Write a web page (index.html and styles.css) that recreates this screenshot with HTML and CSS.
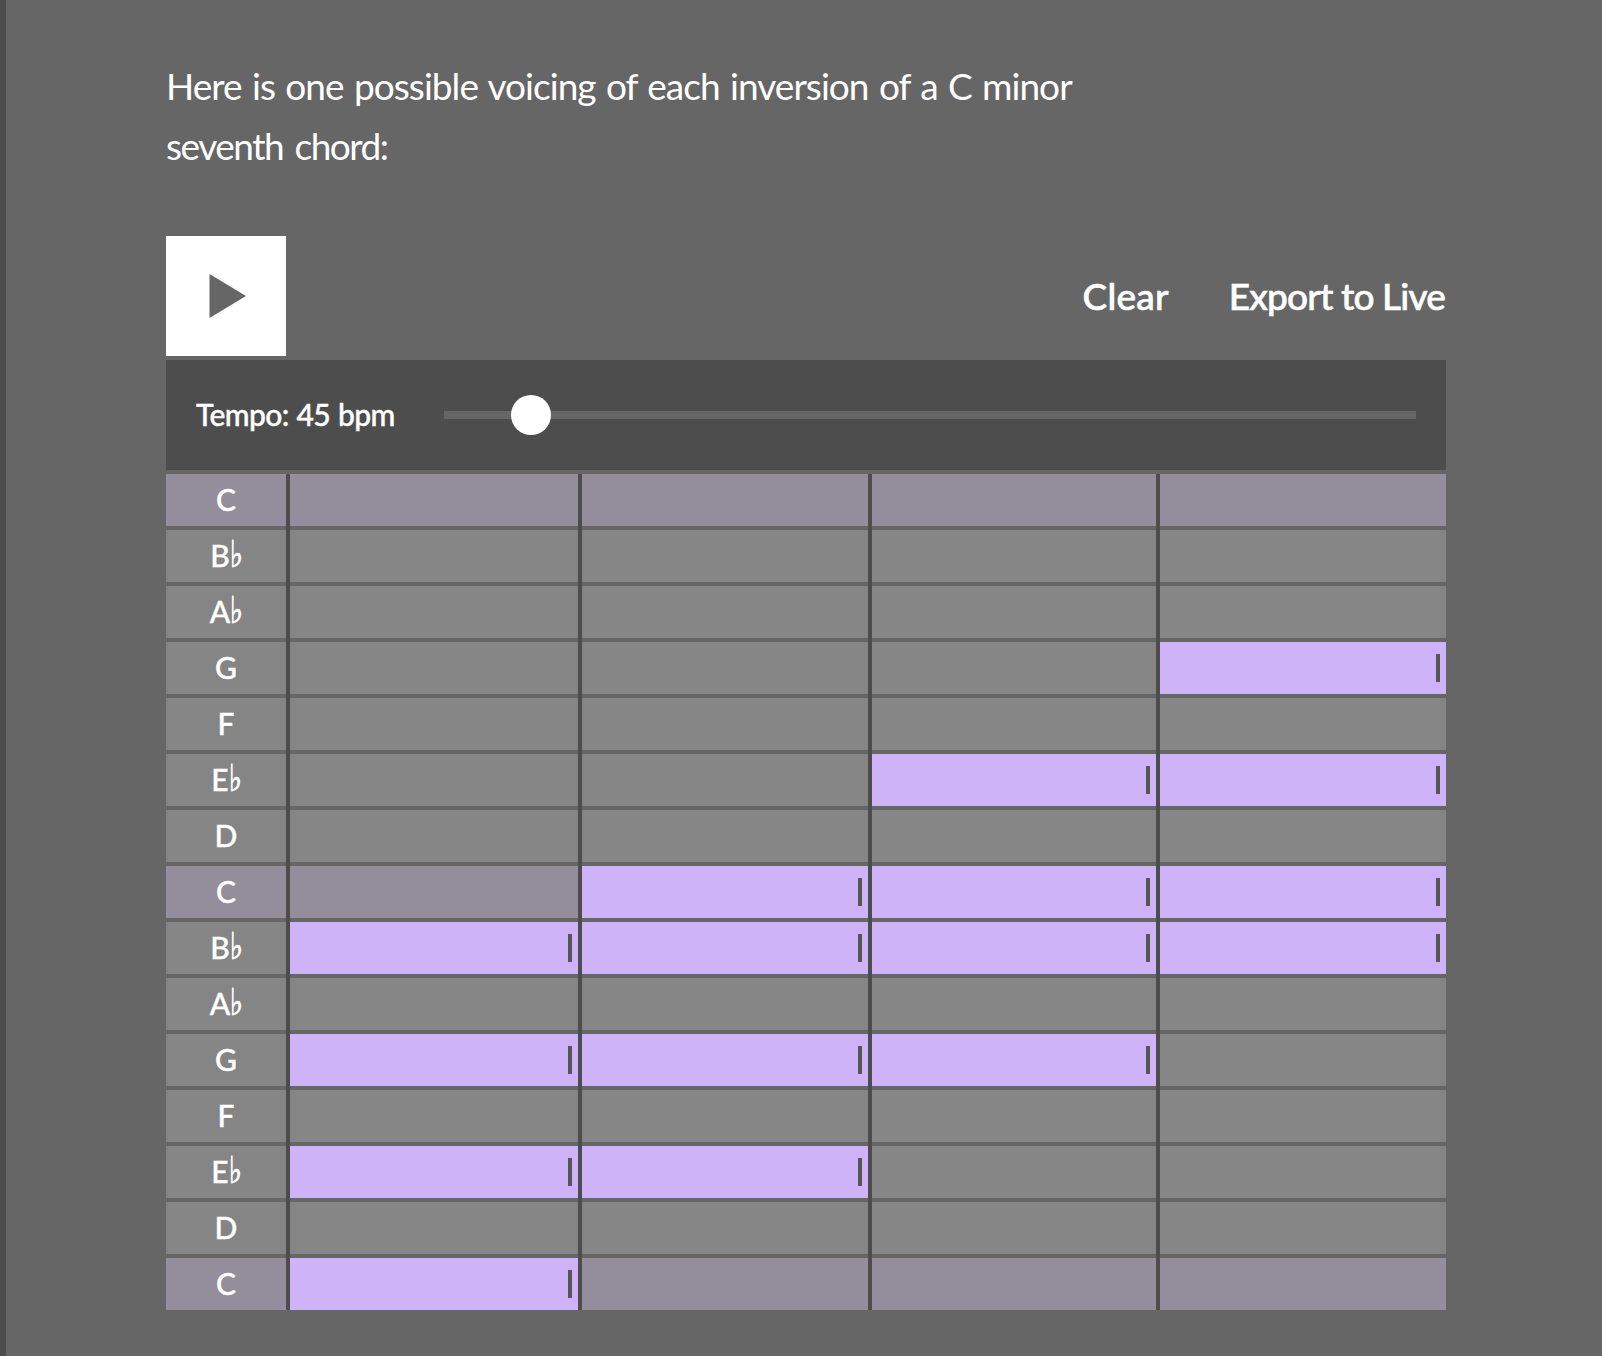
FILE: index.html
```html
<!DOCTYPE html>
<html lang="en">
<head>
<meta charset="utf-8">
<title>Inversions</title>
<link rel="stylesheet" href="styles.css">
</head>
<body>
<main class="page">
<p class="intro"><span class="line-one">Here is one possible voicing of each inversion of a C minor</span><br><span class="line-two">seventh chord:</span></p>
<div class="toolbar">
<button class="play" aria-label="Play"><svg width="37" height="44" viewBox="0 0 37 44"><path d="M0.5 0L37 22L0.5 44Z" fill="#666"/></svg></button>
<nav class="actions"><a class="clear">Clear</a><a class="export">Export to Live</a></nav>
</div>
<div class="tempo"><span class="tempo-label">Tempo: 45 bpm</span><div class="track"><div class="thumb"></div></div></div>
<div class="roll">
<div class="row root"><b>C</b><i></i><i></i><i></i><i></i></div>
<div class="row"><b>B<s>♭</s></b><i></i><i></i><i></i><i></i></div>
<div class="row"><b>A<s>♭</s></b><i></i><i></i><i></i><i></i></div>
<div class="row"><b>G</b><i></i><i></i><i></i><i class="on"></i></div>
<div class="row"><b>F</b><i></i><i></i><i></i><i></i></div>
<div class="row"><b>E<s>♭</s></b><i></i><i></i><i class="on"></i><i class="on"></i></div>
<div class="row"><b>D</b><i></i><i></i><i></i><i></i></div>
<div class="row root"><b>C</b><i></i><i class="on"></i><i class="on"></i><i class="on"></i></div>
<div class="row"><b>B<s>♭</s></b><i class="on"></i><i class="on"></i><i class="on"></i><i class="on"></i></div>
<div class="row"><b>A<s>♭</s></b><i></i><i></i><i></i><i></i></div>
<div class="row"><b>G</b><i class="on"></i><i class="on"></i><i class="on"></i><i></i></div>
<div class="row"><b>F</b><i></i><i></i><i></i><i></i></div>
<div class="row"><b>E<s>♭</s></b><i class="on"></i><i class="on"></i><i></i><i></i></div>
<div class="row"><b>D</b><i></i><i></i><i></i><i></i></div>
<div class="row root"><b>C</b><i class="on"></i><i></i><i></i><i></i></div>
</div>
</main>
</body>
</html>
```
FILE: styles.css
```css
* { box-sizing: border-box; }
body {
  margin: 0;
  background: #666;
  color: #fff;
  font-family: Lato, "Liberation Sans", sans-serif;
}
.page {
  height: 1356px;
  overflow: hidden;
  border-left: 6px solid #4d4d4d;
  padding: 56px 156px 0 160px;
}
.intro {
  margin: 0;
  height: 180px;
  font-size: 37px;
  line-height: 60px;
  white-space: nowrap;
}
.line-one { letter-spacing: -0.95px; word-spacing: 1.8px; }
.line-two { letter-spacing: -1.5px; word-spacing: 3.5px; }
.toolbar {
  display: flex;
  justify-content: space-between;
  height: 120px;
}
.play {
  width: 120px;
  height: 120px;
  padding: 0 0 0 3px;
  border: 0;
  background: #fff;
  display: flex;
  align-items: center;
  justify-content: center;
}
.actions {
  display: flex;
  align-items: center;
  gap: 60px;
  padding: 0 1px 2px 0;
  font-size: 37px;
  font-weight: 500;
  -webkit-text-stroke: 0.6px #fff;
}
.clear { letter-spacing: 0.2px; }
.export { letter-spacing: -0.85px; }
.tempo {
  display: flex;
  align-items: center;
  justify-content: space-between;
  height: 110px;
  margin: 4px 0;
  padding: 0 30px;
  background: #4d4d4d;
}
.tempo-label {
  padding-bottom: 2px;
  font-size: 30px;
  font-weight: 500;
  letter-spacing: -0.6px;
  word-spacing: 0.8px;
  white-space: nowrap;
  -webkit-text-stroke: 0.4px #fff;
}
.track {
  display: flex;
  align-items: center;
  width: 972px;
  height: 8px;
  padding-left: 67px;
  background: #666;
}
.thumb {
  flex: none;
  width: 40px;
  height: 40px;
  border-radius: 50%;
  background: #fff;
}
.roll {
  display: grid;
  grid-auto-rows: 52px;
  row-gap: 4px;
  background:
    linear-gradient(#4d4d4d, #4d4d4d) 120px 0 / 4px 100% no-repeat,
    linear-gradient(#4d4d4d, #4d4d4d) 412px 0 / 4px 100% no-repeat,
    linear-gradient(#4d4d4d, #4d4d4d) 702px 0 / 4px 100% no-repeat,
    linear-gradient(#4d4d4d, #4d4d4d) 990px 0 / 4px 100% no-repeat;
}
.row {
  display: grid;
  grid-template-columns: 120px 288px 286px 284px 286px;
  column-gap: 4px;
}
.row > * { background: #858585; }
.root > * { background: #948d9b; }
.row b {
  display: flex;
  align-items: center;
  justify-content: center;
  height: 52px;
  padding-bottom: 2px;
  font-size: 30px;
  font-weight: 500;
  line-height: 50px;
  -webkit-text-stroke: 0.4px #fff;
}
.row s {
  width: 12px;
  margin-left: 0;
  font-family: "DejaVu Serif", serif;
  font-size: 37px;
  font-weight: 400;
  text-decoration: none;
  transform: scaleX(0.75);
  transform-origin: left;
  -webkit-text-stroke: 0.9px #fff;
}
.row .on {
  display: flex;
  align-items: center;
  justify-content: flex-end;
  padding-right: 6px;
  background: #ceb3f8;
}
.on::after {
  content: "";
  width: 4px;
  height: 28px;
  background: #555;
}
```
